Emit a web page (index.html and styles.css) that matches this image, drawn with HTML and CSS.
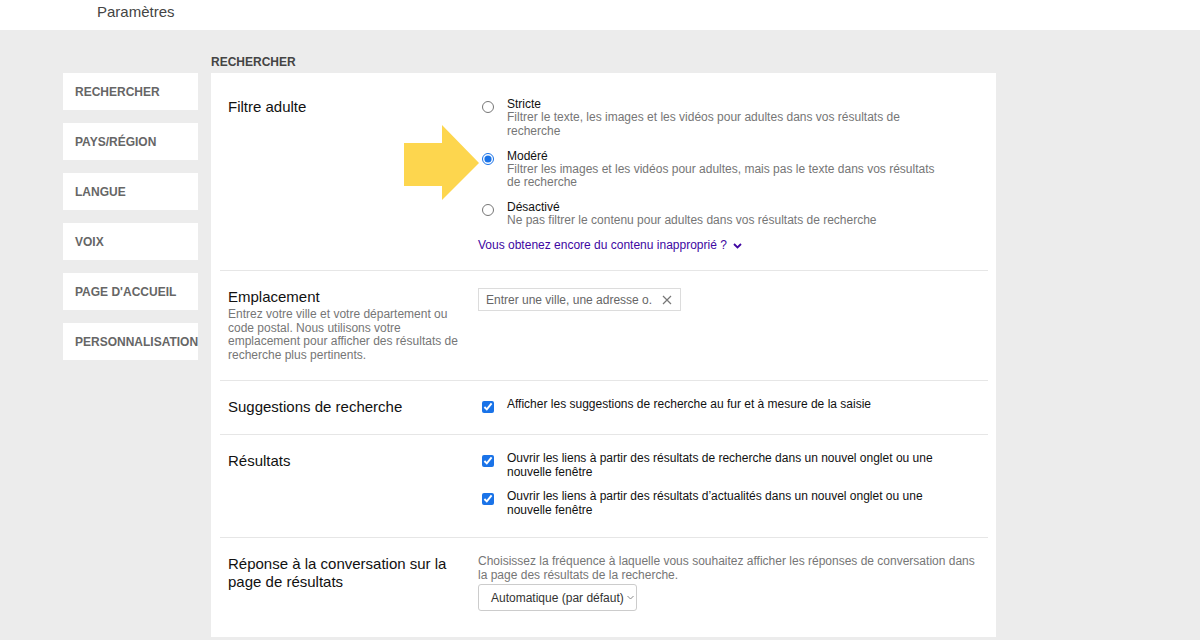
FILE: index.html
```html
<!DOCTYPE html>
<html lang="fr">
<head>
<meta charset="utf-8">
<title>Paramètres</title>
<link rel="stylesheet" href="styles.css">
</head>
<body>
<header class="topbar">
  <h1 class="topbar-title">Paramètres</h1>
</header>
<div class="layout">
  <nav class="nav">
    <a class="nav-item">RECHERCHER</a>
    <a class="nav-item">PAYS/RÉGION</a>
    <a class="nav-item">LANGUE</a>
    <a class="nav-item">VOIX</a>
    <a class="nav-item">PAGE D'ACCUEIL</a>
    <a class="nav-item">PERSONNALISATION</a>
  </nav>
  <main class="content">
    <h2 class="section-label">RECHERCHER</h2>
    <section class="card">
      <div class="row">
        <div class="row-head">
          <h3 class="row-title">Filtre adulte</h3>
        </div>
        <div class="row-body">
          <label class="opt opt-radio">
            <input type="radio" name="safe">
            <span class="opt-text">
              <span class="opt-label">Stricte</span>
              <span class="opt-desc">Filtrer le texte, les images et les vidéos pour adultes dans vos résultats de recherche</span>
            </span>
          </label>
          <label class="opt opt-radio">
            <input type="radio" name="safe" checked>
            <span class="opt-text">
              <span class="opt-label">Modéré</span>
              <span class="opt-desc">Filtrer les images et les vidéos pour adultes, mais pas le texte dans vos résultats de recherche</span>
            </span>
          </label>
          <label class="opt opt-radio">
            <input type="radio" name="safe">
            <span class="opt-text">
              <span class="opt-label">Désactivé</span>
              <span class="opt-desc">Ne pas filtrer le contenu pour adultes dans vos résultats de recherche</span>
            </span>
          </label>
          <a class="more-link">Vous obtenez encore du contenu inapproprié ?
            <svg class="more-chevron" width="9" height="6" viewBox="0 0 9 6"><path d="M1 1 L4.5 4.5 L8 1" fill="none" stroke="#4007a2" stroke-width="1.8"/></svg>
          </a>
        </div>
        <svg class="arrow" width="76" height="75" viewBox="0 0 76 75"><polygon points="0,18 38,18 38,0 75,38 38,75 38,61 0,61" fill="#fdd64e"/></svg>
      </div>

      <div class="row">
        <div class="row-head">
          <h3 class="row-title">Emplacement</h3>
          <p class="row-desc">Entrez votre ville et votre département ou code postal. Nous utilisons votre emplacement pour afficher des résultats de recherche plus pertinents.</p>
        </div>
        <div class="row-body">
          <div class="loc-input">
            <span class="loc-placeholder">Entrer une ville, une adresse o.</span>
            <svg width="10" height="10" viewBox="0 0 10 10"><path d="M1 1 L9 9 M9 1 L1 9" stroke="#777" stroke-width="1.2" fill="none"/></svg>
          </div>
        </div>
      </div>

      <div class="row">
        <div class="row-head">
          <h3 class="row-title">Suggestions de recherche</h3>
        </div>
        <div class="row-body">
          <label class="opt">
            <input type="checkbox" checked>
            <span class="opt-text"><span class="opt-label">Afficher les suggestions de recherche au fur et à mesure de la saisie</span></span>
          </label>
        </div>
      </div>

      <div class="row">
        <div class="row-head">
          <h3 class="row-title">Résultats</h3>
        </div>
        <div class="row-body row-body-checks">
          <label class="opt">
            <input type="checkbox" checked>
            <span class="opt-text"><span class="opt-label">Ouvrir les liens à partir des résultats de recherche dans un nouvel onglet ou une nouvelle fenêtre</span></span>
          </label>
          <label class="opt">
            <input type="checkbox" checked>
            <span class="opt-text"><span class="opt-label">Ouvrir les liens à partir des résultats d’actualités dans un nouvel onglet ou une nouvelle fenêtre</span></span>
          </label>
        </div>
      </div>

      <div class="row">
        <div class="row-head">
          <h3 class="row-title">Réponse à la conversation sur la page de résultats</h3>
        </div>
        <div class="row-body">
          <p class="body-desc">Choisissez la fréquence à laquelle vous souhaitez afficher les réponses de conversation dans la page des résultats de la recherche.</p>
          <div class="select">
            <span>Automatique (par défaut)</span>
            <svg width="7" height="5" viewBox="0 0 7 5"><path d="M0.5 1 L3.5 4 L6.5 1" fill="none" stroke="#888" stroke-width="1"/></svg>
          </div>
        </div>
      </div>
    </section>
  </main>
</div>
</body>
</html>
```

FILE: styles.css
```css
* {
  box-sizing: border-box;
}

body {
  margin: 0;
  background: #ececec;
  font-family: "Liberation Sans", Arial, sans-serif;
  color: #111;
}

.topbar {
  height: 30px;
  background: #fff;
  padding-left: 97px;
}

.topbar-title {
  margin: 0;
  padding-top: 3px;
  font-size: 15px;
  line-height: 18px;
  font-weight: normal;
  color: #444;
}

.layout {
  display: flex;
  gap: 13px;
  padding-left: 63px;
}

.nav {
  width: 135px;
  margin-top: 43px;
  display: flex;
  flex-direction: column;
  gap: 13px;
}

.nav-item {
  height: 37px;
  background: #fff;
  display: flex;
  align-items: center;
  padding-left: 12px;
  font-size: 12px;
  font-weight: bold;
  color: #666;
  white-space: nowrap;
}

.content {
  width: 785px;
  padding-top: 25px;
}

.section-label {
  margin: 0 0 4px;
  font-size: 12px;
  line-height: 14px;
  font-weight: bold;
  color: #444;
}

.card {
  background: #fff;
  padding: 8px 8px 0 9px;
}

.row {
  position: relative;
  display: grid;
  grid-template-columns: 250px 1fr;
  padding: 17px 0 18px 8px;
  border-bottom: 1px solid #e6e6e6;
}

.row:last-child {
  border-bottom: none;
  padding-bottom: 26px;
}

.row-head {
  padding-right: 15px;
}

.row-title {
  margin: 0;
  font-size: 15px;
  line-height: 18px;
  font-weight: normal;
  color: #111;
}

.row-desc {
  margin: 2px 0 0;
  font-size: 12px;
  line-height: 13.5px;
  color: #767676;
}

.row-body {
  margin-top: -1px;
}

.row-body-checks {
  padding-bottom: 2px;
}

.opt {
  display: flex;
  align-items: flex-start;
  padding-left: 4px;
  font-size: 12px;
  line-height: 14px;
}

.opt + .opt {
  margin-top: 10px;
}

.opt-radio + .opt-radio {
  margin-top: 10.5px;
}

.opt input {
  width: 12px;
  height: 12px;
  margin: 4px 13px 0 0;
  flex: none;
  accent-color: #1a73e8;
}

.opt-text {
  max-width: 430px;
}

.opt-label {
  display: block;
  color: #111;
}

.opt-desc {
  display: block;
  line-height: 13.5px;
  color: #767676;
}

.more-link {
  display: flex;
  align-items: center;
  gap: 6px;
  margin-top: 10.5px;
  font-size: 12px;
  line-height: 14px;
  color: #4007a2;
}

.more-chevron {
  margin-top: 1px;
}

.arrow {
  position: absolute;
  left: 184px;
  top: 44px;
}

.loc-input {
  margin-top: 1px;
  width: 203px;
  height: 23px;
  border: 1px solid #dcdcdc;
  padding: 0 8px 0 7px;
  display: flex;
  align-items: center;
  justify-content: space-between;
  font-size: 12px;
  color: #666;
}

.body-desc {
  margin: 0;
  max-width: 502px;
  font-size: 12px;
  line-height: 14px;
  color: #767676;
}

.select {
  margin-top: 2px;
  width: 159px;
  height: 27px;
  border: 1px solid #ccc;
  border-radius: 3px;
  padding-left: 12px;
  display: flex;
  align-items: center;
  gap: 3px;
  font-size: 12px;
  color: #333;
}
```
